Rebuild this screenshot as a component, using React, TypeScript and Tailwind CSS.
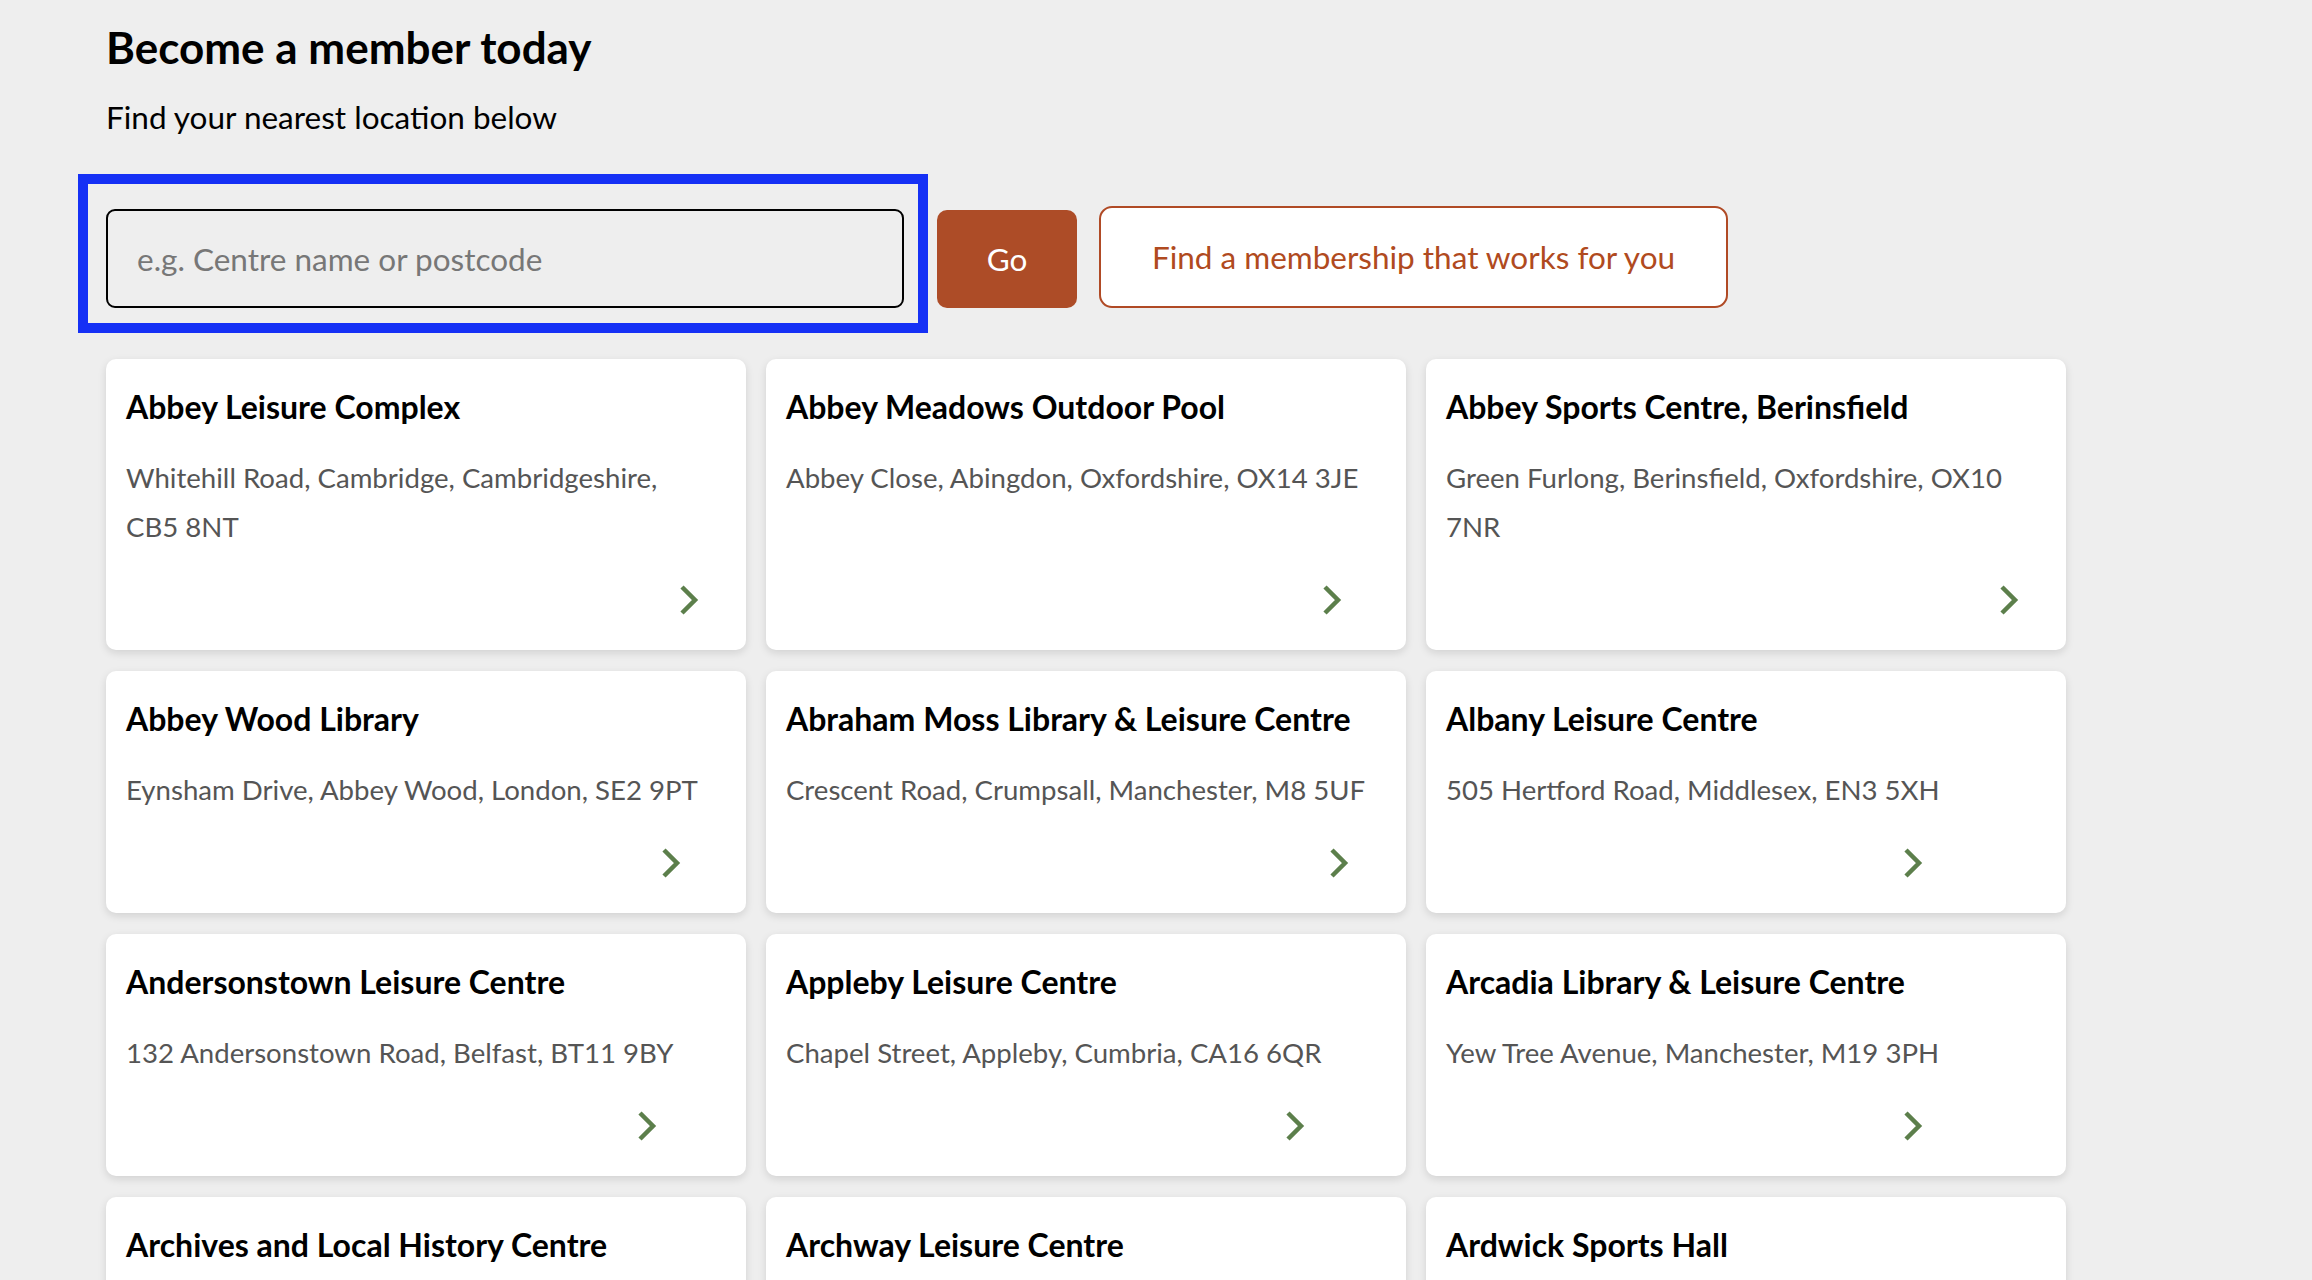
import React from 'react';

interface Centre {
  name: string;
  address: string;
}

const centres: Centre[] = [
  { name: 'Abbey Leisure Complex', address: 'Whitehill Road, Cambridge, Cambridgeshire, CB5 8NT' },
  { name: 'Abbey Meadows Outdoor Pool', address: 'Abbey Close, Abingdon, Oxfordshire, OX14 3JE' },
  { name: 'Abbey Sports Centre, Berinsfield', address: 'Green Furlong, Berinsfield, Oxfordshire, OX10 7NR' },
  { name: 'Abbey Wood Library', address: 'Eynsham Drive, Abbey Wood, London, SE2 9PT' },
  { name: 'Abraham Moss Library & Leisure Centre', address: 'Crescent Road, Crumpsall, Manchester, M8 5UF' },
  { name: 'Albany Leisure Centre', address: '505 Hertford Road, Middlesex, EN3 5XH' },
  { name: 'Andersonstown Leisure Centre', address: '132 Andersonstown Road, Belfast, BT11 9BY' },
  { name: 'Appleby Leisure Centre', address: 'Chapel Street, Appleby, Cumbria, CA16 6QR' },
  { name: 'Arcadia Library & Leisure Centre', address: 'Yew Tree Avenue, Manchester, M19 3PH' },
  { name: 'Archives and Local History Centre', address: 'Town Hall Extension, Manchester, M2 5PD' },
  { name: 'Archway Leisure Centre', address: 'MacDonald Road, London, N19 5DD' },
  { name: 'Ardwick Sports Hall', address: 'Hyde Road, Ardwick, Manchester, M12 6BH' },
];

const Chevron = () => (
  <svg width="20" height="30" viewBox="0 0 20 30" className="block">
    <polyline points="3,2 16,15 3,28" fill="none" stroke="#5c7f4b" strokeWidth="4.5" strokeLinecap="butt" strokeLinejoin="miter" />
  </svg>
);

const CentreCard: React.FC<{ centre: Centre }> = ({ centre }) => (
  <div className="bg-white rounded-[10px] shadow-[0_3px_8px_rgba(0,0,0,0.12)] pt-[30px] pb-[35px] pl-[20px] pr-[25px] flex flex-col">
    <div className="w-fit flex-1 flex flex-col">
      <h3 className="text-[32px] leading-[36px] font-bold text-black">{centre.name}</h3>
      <p className="mt-[28px] max-w-[589px] text-[27.6px] leading-[49px] text-[#555555]">{centre.address}</p>
      <div className="mt-auto pt-[34px] flex justify-end pr-[16.5px]">
        <Chevron />
      </div>
    </div>
  </div>
);

export default function App() {
  return (
    <div className="min-h-screen bg-[#eeeeee] relative overflow-hidden" style={{ fontFamily: 'Lato, "Noto Sans", sans-serif' }}>
      <div className="pl-[106px] pt-[22px]">
        <h1 className="text-[44px] leading-[50px] font-bold text-black">Become a member today</h1>
        <p className="mt-[27px] text-[31.5px] leading-[36px] text-black">Find your nearest location below</p>

        {/* Search row */}
        <div className="mt-[39px] flex items-start">
          <div className="-ml-[28px] border-[10px] border-[#1530f5] pt-[25px] pb-[15px] pl-[18px] pr-[14px]">
            <input
              type="text"
              placeholder="e.g. Centre name or postcode"
              className="w-[798px] h-[99px] border-[2.5px] border-black rounded-[9px] bg-transparent pl-[29px] text-[31.5px] text-black placeholder:text-[#777777] outline-none"
            />
          </div>
          <button className="ml-[9px] mt-[36px] w-[140px] h-[98px] rounded-[10px] bg-[#ad4c27] text-white text-[31.5px] leading-[36px]">
            Go
          </button>
          <button className="ml-[22px] mt-[32px] w-[629px] h-[102px] rounded-[13px] border-[2.5px] border-[#b04a25] bg-white text-[#b04a20] text-[31.5px] leading-[36px]">
            Find a membership that works for you
          </button>
        </div>

        {/* Centres grid */}
        <div className="mt-[26px] grid grid-cols-[repeat(3,640px)] gap-x-[20px] gap-y-[21px]">
          {centres.map((c) => (
            <CentreCard key={c.name} centre={c} />
          ))}
        </div>
      </div>
      <div className="pointer-events-none absolute left-0 right-0 bottom-0 h-[110px] bg-gradient-to-b from-transparent to-[rgba(0,0,0,0.03)]" />
    </div>
  );
}
